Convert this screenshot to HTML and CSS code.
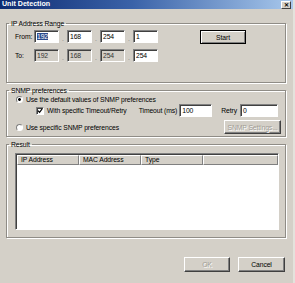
FILE: index.html
```html
<!DOCTYPE html>
<html lang="en">
<head>
  <meta charset="UTF-8">
  <title>Unit Detection</title>
  <link rel="stylesheet" href="styles.css">
</head>
<body>
  <div class="window">
    <div class="titlebar">
      <span class="title">Unit Detection</span>
      <span class="close">&#x2715;</span>
    </div>
    <div class="content">
      <fieldset class="group group-ip">
        <legend>IP Address Range</legend>
        <div class="ip-row">
          <span class="label">From:</span>
          <span class="field"><span class="sel">192</span></span>
          <span class="dot">.</span>
          <span class="field">168</span>
          <span class="dot">.</span>
          <span class="field">254</span>
          <span class="dot">.</span>
          <span class="field">1</span>
          <button class="btn btn-default">Start</button>
        </div>
        <div class="ip-row row-to">
          <span class="label">To:</span>
          <span class="field readonly">192</span>
          <span class="dot">.</span>
          <span class="field readonly">168</span>
          <span class="dot">.</span>
          <span class="field readonly">254</span>
          <span class="dot">.</span>
          <span class="field">254</span>
        </div>
      </fieldset>

      <fieldset class="group group-snmp">
        <legend>SNMP preferences</legend>
        <div class="opt-row">
          <span class="radio checked"></span>
          <span>Use the default values of SNMP preferences</span>
        </div>
        <div class="opt-row row-timeout">
          <span class="check">
            <svg width="6" height="6" viewBox="0 0 7 7"><path d="M1 3 L3 5 L6 1" fill="none" stroke="#000" stroke-width="1.4"/></svg>
          </span>
          <span>With specific Timeout/Retry</span>
          <span class="timeout-label">Timeout (ms)</span>
          <span class="field timeout">100</span>
          <span class="retry-label">Retry</span>
          <span class="field retry">0</span>
        </div>
        <div class="opt-row row-specific">
          <span class="radio"></span>
          <span>Use specific SNMP preferences</span>
          <button class="btn disabled snmp-btn">SNMP Settings...</button>
        </div>
      </fieldset>

      <fieldset class="group group-result">
        <legend>Result</legend>
        <div class="listview">
          <div class="lv-header">
            <span class="col col-ip">IP Address</span>
            <span class="col col-mac">MAC Address</span>
            <span class="col col-type">Type</span>
            <span class="col col-rest"></span>
          </div>
        </div>
      </fieldset>

      <div class="actions">
        <button class="btn disabled">OK</button>
        <button class="btn btn-cancel">Cancel</button>
      </div>
    </div>
  </div>
</body>
</html>
```

FILE: styles.css
```css
* {
  box-sizing: border-box;
}
body {
  margin: 0;
  background: #d4d0c8;
  font-family: "Liberation Sans", Arial, sans-serif;
  font-size: 6.8px;
  letter-spacing: -0.1px;
  color: #000;
}
.window {
  width: 295px;
  height: 283px;
  overflow: hidden;
  border-right: 2px solid #e4e2dc;
}
.titlebar {
  height: 9px;
  display: flex;
  align-items: center;
  justify-content: space-between;
  padding: 0 2px 0 2px;
  background: linear-gradient(90deg, #0e2c72 0%, #3a62a8 45%, #a8c8ec 100%);
}
.title {
  color: #fff;
  font-weight: bold;
  font-size: 7.1px;
  letter-spacing: 0;
  line-height: 9px;
}
.close {
  width: 10px;
  height: 8px;
  margin-top: 1px;
  background: #d4d0c8;
  border: 1px solid;
  border-color: #fff #404040 #404040 #fff;
  font-size: 6px;
  font-weight: bold;
  line-height: 6px;
  text-align: center;
}
.content {
  padding: 10px 7px 0 6px;
}
.group {
  margin: 0;
  padding: 0;
  min-width: 0;
  border: 1px solid #8f8c86;
  box-shadow: inset 1px 1px #fff, 1px 1px #fff;
}
.group legend {
  margin-left: 2px;
  padding: 0 2px;
  line-height: 9px;
}
.group-ip {
  padding-bottom: 20px;
}
.group-snmp {
  margin-top: 3px;
  padding-bottom: 2px;
}
.group-result {
  margin-top: 3px;
  padding-bottom: 7px;
}

/* ip rows */
.ip-row {
  display: flex;
  align-items: flex-start;
  height: 13px;
  margin-top: 2px;
  padding-left: 8px;
}
.row-to {
  margin-top: 6px;
}
.ip-row .label {
  width: 19px;
  line-height: 13px;
}
.field {
  flex-shrink: 0;
  width: 25px;
  height: 13px;
  padding-left: 2px;
  background: #fff;
  border: 1px solid;
  border-color: #808080 #fff #fff #808080;
  box-shadow: inset 1px 1px #404040;
  line-height: 11px;
  white-space: nowrap;
}
.field.readonly {
  background: #d4d0c8;
  color: #333;
}
.sel {
  background: #2b4a8c;
  color: #fff;
}
.dot {
  width: 8px;
  line-height: 17px;
  text-align: center;
  color: #808080;
}
.btn {
  flex-shrink: 0;
  height: 14px;
  padding: 0;
  background: #d4d0c8;
  border: 1px solid;
  border-color: #fff #404040 #404040 #fff;
  box-shadow: inset -1px -1px #808080;
  font-family: inherit;
  font-size: inherit;
  letter-spacing: inherit;
  color: #000;
  white-space: nowrap;
}
.btn-default {
  width: 46px;
  margin-left: 42px;
  border: 1px solid #000;
  box-shadow: inset 1px 1px #fff, inset -1px -1px #808080;
}
.btn.disabled {
  color: #a09c94;
  text-shadow: 1px 1px #fff;
}

/* snmp options */
.opt-row {
  display: flex;
  align-items: center;
  padding-left: 9px;
  white-space: nowrap;
}
.opt-row:first-of-type {
  height: 9px;
}
.radio {
  flex-shrink: 0;
  width: 7px;
  height: 7px;
  margin-right: 3px;
  border-radius: 50%;
  background: #fff;
  border: 1px solid;
  border-color: #808080 #fff #fff #808080;
}
.radio.checked {
  background: radial-gradient(circle, #000 1.2px, #fff 1.6px);
}
.row-timeout {
  height: 13px;
  padding-left: 29px;
  padding-right: 7px;
}
.check {
  display: flex;
  align-items: center;
  justify-content: center;
  width: 8px;
  height: 8px;
  margin-right: 3px;
  background: #fff;
  border: 1px solid;
  border-color: #808080 #fff #fff #808080;
  box-shadow: inset 1px 1px #404040;
}
.timeout-label {
  margin-left: auto;
  margin-right: 2px;
}
.field.timeout {
  width: 33px;
}
.retry-label {
  margin-left: 9px;
  margin-right: 3px;
}
.field.retry {
  width: 38px;
}
.row-specific {
  height: 14px;
  margin-top: 3px;
  padding-right: 4px;
}
.snmp-btn {
  width: 57px;
  margin-left: auto;
}

/* result list */
.listview {
  width: 264px;
  height: 77px;
  margin: 4px 0 0 8px;
  background: #fff;
  border: 1px solid;
  border-color: #808080 #fff #fff #808080;
  box-shadow: inset 1px 1px #404040;
  padding: 1px 0 0 1px;
}
.lv-header {
  display: flex;
  height: 10px;
}
.col {
  height: 10px;
  padding-left: 3px;
  background: #d4d0c8;
  border: 1px solid;
  border-color: #fff #808080 #808080 #fff;
  line-height: 8px;
}
.col-ip,
.col-mac,
.col-type {
  width: 62px;
}
.col-rest {
  flex: 1;
}

.actions {
  display: flex;
  justify-content: flex-end;
  gap: 8px;
  margin-top: 19px;
  padding-right: 1px;
}
.actions .btn {
  width: 46px;
  height: 15px;
}
.actions .btn-cancel {
  width: 47px;
}
```
